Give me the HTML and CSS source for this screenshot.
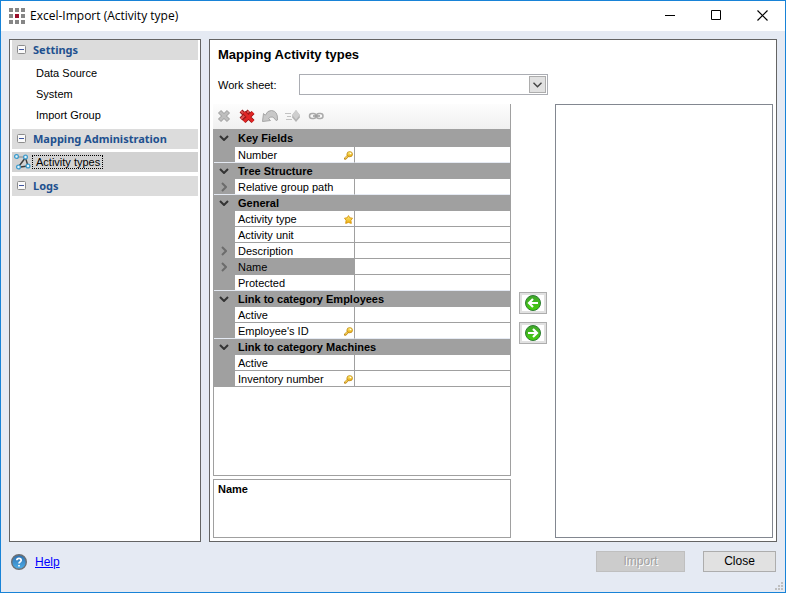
FILE: index.html
```html
<!DOCTYPE html>
<html lang="en">
<head>
    <meta charset="UTF-8">
    <meta name="viewport" content="width=device-width, initial-scale=1.0">
    <title>Excel-Import (Activity type)</title>
    <link rel="stylesheet" href="styles.css">
</head>
<body>

<!-- Shared icons -->
<svg class="icon-defs" aria-hidden="true">
    <defs>
        <linearGradient id="green" x1="0" y1="0" x2="0" y2="1">
            <stop offset="0" stop-color="#3fa52c"/>
            <stop offset="1" stop-color="#45cf0c"/>
        </linearGradient>
        <linearGradient id="gold" x1="0" y1="0" x2="0" y2="1">
            <stop offset="0" stop-color="#fff27a"/>
            <stop offset="1" stop-color="#e9a90c"/>
        </linearGradient>
        <linearGradient id="blue" x1="0" y1="0" x2="0" y2="1">
            <stop offset="0" stop-color="#2d6fae"/>
            <stop offset="1" stop-color="#4fb0ea"/>
        </linearGradient>
    </defs>
    <symbol id="down" viewBox="0 0 10 6"><path d="M1 1l4 4 4-4" fill="none" stroke="#333" stroke-width="2"/></symbol>
    <symbol id="right" viewBox="0 0 6 10"><path d="M1 1l4 4-4 4" fill="none" stroke="#6c6c6c" stroke-width="2"/></symbol>
    <symbol id="minus" viewBox="0 0 9 9">
        <rect x=".5" y=".5" width="8" height="8" rx="1" fill="#fafafa" stroke="#8c8c8c"/>
        <path d="M2 4.500h5" stroke="#3f56a0"/>
    </symbol>
    <symbol id="key" viewBox="0 0 9 9">
        <path d="M1.200 7.600L4.500 4.400" stroke="#c08a1c" stroke-width="2.400" stroke-linecap="round"/>
        <path d="M1.200 7.400L4.500 4.200" stroke="#f8d65e" stroke-width="1.200"/>
        <ellipse cx="5.700" cy="3.200" rx="2.800" ry="2.600" fill="url(#gold)" stroke="#c08a1c" stroke-width=".8"/>
        <circle cx="6.500" cy="2.500" r=".8" fill="#fff"/>
    </symbol>
    <symbol id="star" viewBox="0 0 9 9">
        <path d="M4.500.6l1.300 2.200 2.700.4-1.600 2.200.4 3-2.800-1-2.800 1 .4-3L.5 3.200l2.700-.4z" fill="url(#gold)" stroke="#d9960f" stroke-width=".9" stroke-linejoin="round"/>
    </symbol>
</svg>

<div class="window">
    <!-- Title bar -->
    <header class="titlebar">
        <svg class="app-icon" viewBox="0 0 16 16">
            <g fill="#868686">
                <path d="M0 0h4v4H0zM6 0h4v4H6zM12 0h4v4h-4zM0 6h4v4H0zM12 6h4v4h-4zM0 12h4v4H0zM6 12h4v4H6zM12 12h4v4h-4z"/>
            </g>
            <path d="M6 6h4v4H6z" fill="#9b0f2b"/>
        </svg>
        <span class="title">Excel-Import (Activity type)</span>
        <button class="win-button" aria-label="Minimize"><svg viewBox="0 0 11 11"><path d="M0 5.500h10" stroke="#000"/></svg></button>
        <button class="win-button" aria-label="Maximize"><svg viewBox="0 0 11 11"><path d="M.5.500h9v9h-9z" fill="none" stroke="#000"/></svg></button>
        <button class="win-button" aria-label="Close window"><svg viewBox="0 0 11 11"><path d="M.5.500l10 10M10.500.500l-10 10" stroke="#000" stroke-width="1.200"/></svg></button>
    </header>

    <main class="content">
        <!-- Navigation -->
        <nav class="sidebar">
            <button class="nav-group"><svg><use href="#minus"/></svg>Settings</button>
            <div class="nav-items">
                <a href="#">Data Source</a>
                <a href="#">System</a>
                <a href="#">Import Group</a>
            </div>
            <button class="nav-group"><svg><use href="#minus"/></svg>Mapping Administration</button>
            <a href="#" class="nav-selected">
                <svg viewBox="0 0 17 16">
                    <path d="M4.500 3h5" stroke="#3a3a3a" stroke-dasharray="1 1"/>
                    <path d="M10.800 4.500L5.500 11.500M11.800 5l1.800 5.500M6.500 13l5.500-.8" fill="none" stroke="#3a3a3a" stroke-width="1.400"/>
                    <g fill="#e4f3fb" stroke="#3f9ccc" stroke-width="1.300">
                        <circle cx="2.500" cy="2.500" r="1.900"/>
                        <circle cx="11.500" cy="3" r="1.900"/>
                        <circle cx="4.500" cy="13" r="1.900"/>
                        <circle cx="14" cy="12" r="1.900"/>
                    </g>
                </svg>
                <span>Activity types</span>
            </a>
            <button class="nav-group"><svg><use href="#minus"/></svg>Logs</button>
        </nav>

        <!-- Mapping -->
        <section class="mapping">
            <h1>Mapping Activity types</h1>
            <div class="sheet-row">
                <label for="work-sheet">Work sheet:</label>
                <div class="select-box">
                    <select id="work-sheet"><option></option></select>
                    <span class="select-arrow"><svg viewBox="0 0 9 6"><path d="M.5.700l4 4 4-4" fill="none" stroke="#444" stroke-width="1.400"/></svg></span>
                </div>
            </div>

            <div class="columns">
                <div class="left-column">
                    <div class="properties">
                        <div class="toolbar">
                            <button aria-label="Remove"><svg viewBox="0 0 16 16"><path d="M3.500 3.500l9 9M12.500 3.500l-9 9" stroke="#a0a0a0" stroke-width="4.400"/><path d="M4 4l8 8M12 4l-8 8" stroke="#bebebe" stroke-width="2.800"/></svg></button>
                            <button aria-label="Remove all"><svg viewBox="0 0 16 16">
                                <path d="M2 3l8 8M10 3l-8 8" stroke="#8f1717" stroke-width="4"/>
                                <path d="M2 3l8 8M10 3l-8 8" stroke="#e05050" stroke-width="2.200"/>
                                <path d="M5 4.500l9 9M14 4.500l-9 9" stroke="#9c1414" stroke-width="4.400"/>
                                <path d="M5 4.500l9 9M14 4.500l-9 9" stroke="#e22626" stroke-width="2.800"/>
                            </svg></button>
                            <button aria-label="Undo"><svg viewBox="0 0 16 16"><path d="M1.500 5.500L.5 13.500 8.500 12.500 6.500 10.500Q10.500 6.500 14 12.500L15.500 12Q16 3 9.500 2.500 5.500 2.300 3.300 7.200z" fill="#c8c8c8" stroke="#a6a6a6" stroke-linejoin="round"/></svg></button>
                            <button aria-label="Assign automatically"><svg viewBox="0 0 16 16"><path d="M0 5.500h6M2 8.500h4M1 11.500h6" stroke="#c2c2c2"/><path d="M11 2l3.800 5v2.500L11 14 7.200 9.500V7z" fill="#b4b4b4"/><path d="M11 2l3.800 5L11 11.500 7.200 7z" fill="#cfcfcf"/></svg></button>
                            <button aria-label="Link"><svg viewBox="0 0 16 16" fill="none" stroke="#aaa" stroke-width="1.500"><rect x="1.500" y="5.500" width="6.500" height="5" rx="2.500"/><rect x="8.500" y="5.500" width="6.500" height="5" rx="2.500"/><path d="M5 8h7" stroke="#999"/></svg></button>
                        </div>
                        <table class="grid">
                            <colgroup><col class="gutter-col"><col class="name-col"><col></colgroup>
                            <tbody>
                                <tr class="category first"><th><svg class="down"><use href="#down"/></svg></th><th colspan="2">Key Fields</th></tr>
                                <tr class="last"><th></th><td><div>Number<svg><use href="#key"/></svg></div></td><td></td></tr>
                                <tr class="category"><th><svg class="down"><use href="#down"/></svg></th><th colspan="2">Tree Structure</th></tr>
                                <tr class="last"><th><svg class="right"><use href="#right"/></svg></th><td><div>Relative group path</div></td><td></td></tr>
                                <tr class="category"><th><svg class="down"><use href="#down"/></svg></th><th colspan="2">General</th></tr>
                                <tr><th></th><td><div>Activity type<svg><use href="#star"/></svg></div></td><td></td></tr>
                                <tr><th></th><td><div>Activity unit</div></td><td></td></tr>
                                <tr><th><svg class="right"><use href="#right"/></svg></th><td><div>Description</div></td><td></td></tr>
                                <tr class="selected"><th><svg class="right"><use href="#right"/></svg></th><td><div>Name</div></td><td></td></tr>
                                <tr class="last"><th></th><td><div>Protected</div></td><td></td></tr>
                                <tr class="category"><th><svg class="down"><use href="#down"/></svg></th><th colspan="2">Link to category Employees</th></tr>
                                <tr><th></th><td><div>Active</div></td><td></td></tr>
                                <tr class="last"><th></th><td><div>Employee's ID<svg><use href="#key"/></svg></div></td><td></td></tr>
                                <tr class="category"><th><svg class="down"><use href="#down"/></svg></th><th colspan="2">Link to category Machines</th></tr>
                                <tr><th></th><td><div>Active</div></td><td></td></tr>
                                <tr><th></th><td><div>Inventory number<svg><use href="#key"/></svg></div></td><td></td></tr>
                            </tbody>
                        </table>
                    </div>
                    <div class="description">Name</div>
                </div>

                <div class="move-buttons">
                    <button aria-label="Assign"><svg viewBox="0 0 16 16"><circle cx="8" cy="8" r="7.500" fill="url(#green)" stroke="#2e7d32"/><path d="M13 8H4.500M8 4L4 8l4 4" fill="none" stroke="#fff" stroke-width="2.200"/></svg></button>
                    <button aria-label="Unassign"><svg viewBox="0 0 16 16"><circle cx="8" cy="8" r="7.500" fill="url(#green)" stroke="#2e7d32"/><path d="M3 8h8.500M8 4l4 4-4 4" fill="none" stroke="#fff" stroke-width="2.200"/></svg></button>
                </div>

                <div class="source-list"></div>
            </div>
        </section>
    </main>

    <!-- Footer -->
    <footer class="footer">
        <svg class="help-icon" viewBox="0 0 16 16">
            <circle cx="8" cy="8" r="7.300" fill="url(#blue)" stroke="#6b6f73" stroke-width="1.400"/>
            <path d="M5.800 6.300Q5.900 4.300 8 4.300T10.200 6.200Q10.200 7.200 9 7.900 8 8.500 8 9.600M8 11v1.600" fill="none" stroke="#fff" stroke-width="1.700"/>
        </svg>
        <a href="#" class="help-link">Help</a>
        <button class="dialog-button import" disabled>Import</button>
        <button class="dialog-button">Close</button>
    </footer>
    <svg class="grip" viewBox="0 0 8 8"><path d="M6 0h2v2H6zM3 3h2v2H3zM6 3h2v2H6zM0 6h2v2H0zM3 6h2v2H3zM6 6h2v2H6z" fill="#bfbfbf"/></svg>
</div>

</body>
</html>
```
FILE: styles.css
```css
* {
    box-sizing: border-box;
}
body {
    margin: 0;
    font-family: "Liberation Sans", Arial, sans-serif;
    font-size: 11px;
    color: #000;
}
button, select {
    font: inherit;
    color: inherit;
    border: none;
    border-radius: 0;
    padding: 0;
    margin: 0;
    background: none;
}
svg {
    display: block;
    flex: none;
}
a {
    color: inherit;
    text-decoration: none;
}
.icon-defs {
    position: absolute;
    width: 0;
    height: 0;
}
.window {
    position: relative;
    display: flex;
    flex-direction: column;
    min-height: 100vh;
    border: 1px solid #1883d7;
    background-color: #e5eaf3;
}

/* Title bar */
.titlebar {
    display: flex;
    align-items: center;
    height: 30px;
    padding-left: 8px;
    background-color: #fff;
}
.app-icon {
    width: 16px;
    height: 16px;
    margin-right: 5px;
}
.title {
    flex: 1;
    padding-bottom: 2px;
    font-family: "Open Sans", sans-serif;
    font-size: 12px;
}
.win-button {
    display: flex;
    align-items: center;
    justify-content: center;
    width: 46px;
    height: 28px;
    margin-bottom: 2px;
}
.win-button svg {
    width: 11px;
    height: 11px;
}

/* Content */
.content {
    flex: 1;
    display: flex;
    gap: 8px;
    padding: 8px 8px 0;
}
.sidebar, .mapping {
    border: 1px solid #646464;
    background-color: #fff;
}
.sidebar {
    flex: none;
    width: 192px;
    padding: 0 2px;
}
.nav-group {
    display: flex;
    align-items: center;
    gap: 7px;
    width: 100%;
    height: 20px;
    padding: 0 0 2px 5px;
    margin-bottom: 3px;
    background-color: #dcdcdc;
    color: #21508f;
    font-family: "Noto Sans", sans-serif;
    font-weight: bold;
}
.nav-group svg {
    width: 9px;
    height: 9px;
}
.nav-items {
    margin-bottom: 3px;
}
.nav-items a {
    display: block;
    padding-left: 24px;
    line-height: 21px;
}
.nav-selected {
    display: flex;
    align-items: center;
    gap: 1px;
    height: 20px;
    padding-left: 2px;
    margin-bottom: 4px;
    background-color: #d2d2d2;
}
.nav-selected svg {
    width: 17px;
    height: 16px;
}
.nav-selected span {
    padding: 0 2px 0 3px;
    line-height: 12px;
    border: 1px dotted #000;
}

/* Mapping panel */
.mapping {
    flex: 1;
    display: flex;
    flex-direction: column;
    min-width: 0;
    padding: 0 3px 3px;
}
.mapping h1 {
    margin: 5px 0 9px 5px;
    font-size: 13px;
    line-height: 20px;
}
.sheet-row {
    display: flex;
    align-items: center;
    margin-bottom: 9px;
    padding-left: 5px;
}
.sheet-row label {
    width: 81px;
}
.select-box {
    position: relative;
    width: 249px;
}
.select-box select {
    display: block;
    width: 100%;
    height: 21px;
    appearance: none;
    border: 1px solid #abadb3;
    background-color: #fff;
}
.select-arrow {
    position: absolute;
    top: 2px;
    right: 2px;
    display: flex;
    align-items: center;
    justify-content: center;
    width: 17px;
    height: 17px;
    border: 1px solid #adadad;
    background-color: #e1e1e1;
    pointer-events: none;
}
.select-arrow svg {
    width: 9px;
    height: 6px;
}
.columns {
    flex: 1;
    display: flex;
}
.left-column {
    display: flex;
    flex-direction: column;
    flex: none;
    width: 298px;
    gap: 3px;
}
.properties {
    flex: 1;
    border: 1px solid #a0a0a0;
    border-top: none;
}
.toolbar {
    display: flex;
    align-items: center;
    gap: 7px;
    height: 25px;
    margin-left: -1px;
    padding: 0 0 2px 3px;
    background: linear-gradient(#fdfdfd, #f0f0f0);
}
.toolbar svg {
    width: 16px;
    height: 16px;
}

/* Property grid */
.grid {
    width: 100%;
    table-layout: fixed;
    border-collapse: separate;
    border-spacing: 0;
}
.gutter-col {
    width: 21px;
}
.name-col {
    width: 120px;
}
.grid th, .grid td {
    height: 16px;
    padding: 0;
    line-height: 15px;
}
.grid td {
    border-bottom: 1px solid #a0a0a0;
}
.grid th {
    background-color: #a0a0a0;
    text-align: left;
}
.grid td:nth-child(2) {
    border-right: 1px solid #a0a0a0;
}
.grid td div {
    display: flex;
    align-items: center;
    justify-content: space-between;
    height: 15px;
    padding: 1px 1px 0 3px;
    line-height: 14px;
}
.grid td svg {
    width: 9px;
    height: 9px;
}
.grid .category th + th {
    padding-left: 3px;
}
.grid .first th {
    height: 18px;
}
.grid .last td {
    border-bottom-color: #e5eaf3;
}
.grid .last th {
    border-bottom: 1px solid #e5eaf3;
}
.grid .selected td:nth-child(2) {
    background-color: #a0a0a0;
}
.grid .down {
    width: 10px;
    height: 6px;
    margin-left: 5px;
}
.grid .right {
    width: 6px;
    height: 10px;
    margin-left: 7px;
}
.description {
    height: 59px;
    padding: 3px 4px;
    border: 1px solid #a0a0a0;
    font-weight: bold;
}

/* Move buttons and source list */
.move-buttons {
    display: flex;
    flex-direction: column;
    justify-content: center;
    gap: 8px;
    padding: 0 8px 7px;
}
.move-buttons button {
    display: flex;
    align-items: center;
    justify-content: center;
    width: 28px;
    height: 22px;
    border: 1px solid #adadad;
    background-color: #fff;
    box-shadow: inset 0 0 0 2px #e1e1e1;
}
.move-buttons svg {
    width: 16px;
    height: 16px;
}
.source-list {
    flex: 1;
    border: 1px solid #828790;
}

/* Footer */
.footer {
    display: flex;
    align-items: center;
    height: 50px;
    padding: 0 9px 12px 10px;
}
.help-icon {
    width: 16px;
    height: 16px;
    margin: 2px 8px 0 0;
}
.help-link {
    flex: 1;
    padding-top: 1px;
    color: #00f;
    font-size: 12px;
    text-decoration: underline;
}
.dialog-button {
    width: 73px;
    height: 21px;
    border: 1px solid #adadad;
    background-color: #e1e1e1;
    font-size: 12px;
}
.dialog-button.import {
    width: 89px;
    margin-right: 18px;
    border-color: #bfbfbf;
    background-color: #ccc;
    color: #a0a0a0;
    text-shadow: 1px 1px 0 #fff;
}
.grip {
    position: absolute;
    right: 2px;
    bottom: 2px;
    width: 8px;
    height: 8px;
}
```
